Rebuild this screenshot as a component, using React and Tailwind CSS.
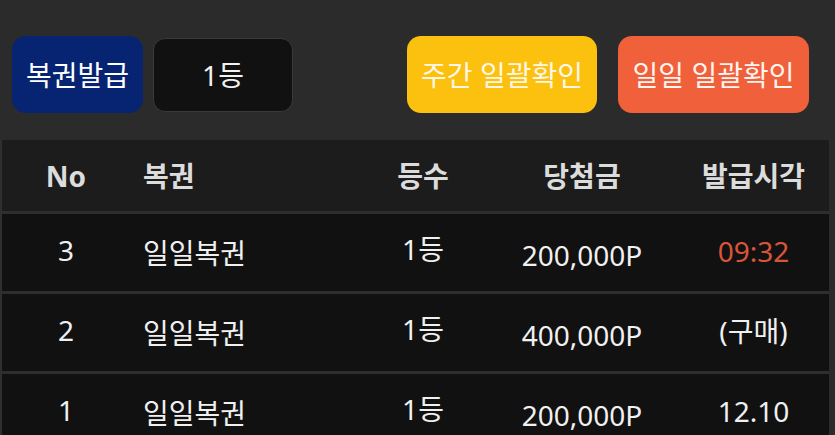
import React from "react";

const rows = [
  { no: 3, name: "일일복권", rank: "1등", prize: "200,000P", time: "09:32", hot: true },
  { no: 2, name: "일일복권", rank: "1등", prize: "400,000P", time: "(구매)" },
  { no: 1, name: "일일복권", rank: "1등", prize: "200,000P", time: "12.10" },
];

const font = { fontFamily: '"Noto Sans", "Noto Sans CJK KR", sans-serif' };

const App = () => {
  return (
    <div
      className="w-[835px] h-[435px] bg-[#2b2b2b] overflow-hidden text-white"
      style={font}
    >
      {/* top buttons */}
      <div className="flex items-start h-[140px] pl-[12px] pr-[26px] pt-[36px]">
        <button className="w-[131px] h-[77px] rounded-[14px] bg-[#062472] text-[28px] text-white">
          복권발급
        </button>
        <div className="ml-[10px] mt-[2px] w-[140px] h-[74px] rounded-[12px] bg-[#111111] border border-[#3a3a3a] flex items-center justify-center text-[28px] text-[#f2f2f2]">
          1등
        </div>

        <div className="ml-auto flex gap-[21px]">
          <button className="w-[190px] h-[77px] rounded-[14px] bg-[#fcc00f] text-[28px] text-[#fff7e6]">
            주간 일괄확인
          </button>
          <button className="w-[191px] h-[77px] rounded-[14px] bg-[#f0603a] text-[28px] text-[#fff4ef]">
            일일 일괄확인
          </button>
        </div>
      </div>

      {/* table */}
      <div className="w-[829px] border-l-2 border-[#2f2f2f]">
        <div className="flex items-center h-[74px] bg-[#1c1c1c] border-b-[3px] border-[#2e2e2e] text-[28px] font-bold text-[#dcdcdc]">
          <div className="w-[128px] text-center">No</div>
          <div className="w-[230px] pl-[13px]">복권</div>
          <div className="w-[126px] text-center">등수</div>
          <div className="w-[192px] text-center">당첨금</div>
          <div className="flex-1 text-center">발급시각</div>
        </div>

        {rows.map((r) => (
          <div
            key={r.no}
            className="flex items-center h-[80px] bg-[#111111] border-b-[3px] border-[#2e2e2e] text-[28px] text-[#f0f0f0]"
          >
            <div className="w-[128px] text-center -mt-[6px]">{r.no}</div>
            <div className="w-[230px] pl-[13px]">{r.name}</div>
            <div className="w-[126px] text-center -mt-[8px]">{r.rank}</div>
            <div className="w-[192px] text-center mt-[5px]">{r.prize}</div>
            <div
              className={
                r.hot
                  ? "flex-1 text-center -mt-[4px] text-[#d9553a]"
                  : "flex-1 text-center -mt-[4px]"
              }
            >
              {r.time}
            </div>
          </div>
        ))}
      </div>
    </div>
  );
};

export default App;
